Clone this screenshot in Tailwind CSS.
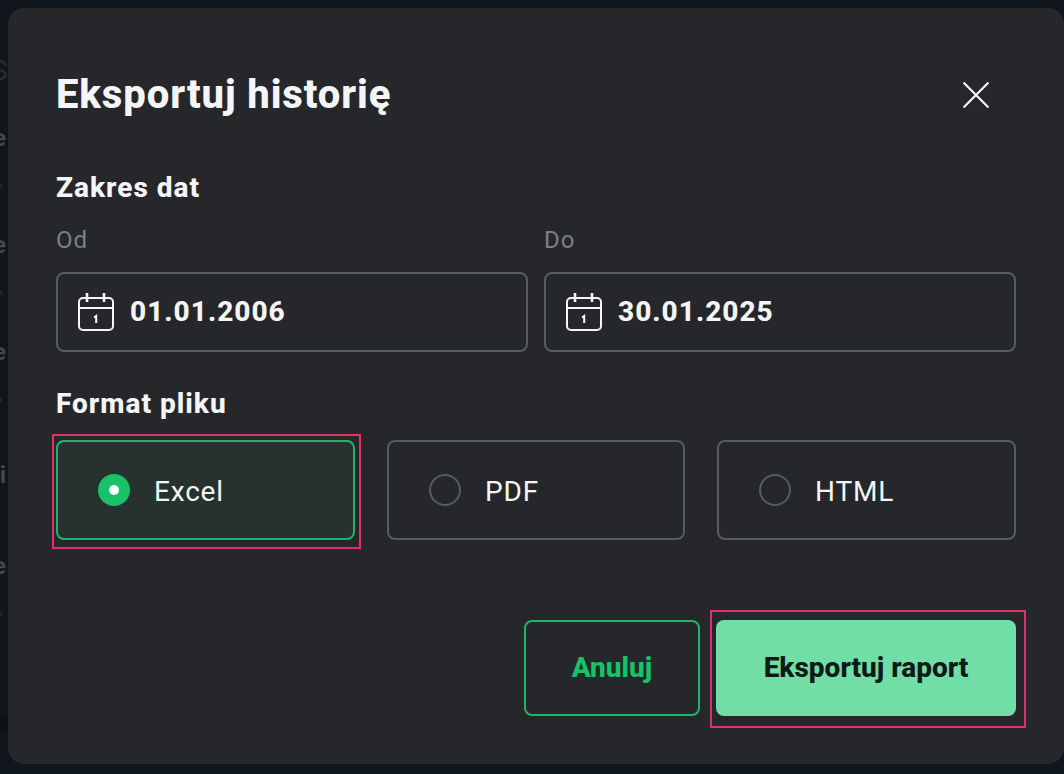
<!DOCTYPE html>
<html lang="en">
<head>
    <meta charset="UTF-8" />
    <title>Eksportuj historię</title>
    <script src="https://cdn.jsdelivr.net/npm/@tailwindcss/browser@4"></script>
</head>
<body class="relative bg-[#10161d] font-['Roboto',sans-serif] text-[#f4f5f7] w-[1064px] h-[774px] overflow-hidden">
    <!-- Page behind the dialog, only its left edge shows -->
    <div class="absolute left-0 top-0 w-[8px] h-[774px] overflow-hidden text-[#44484e] font-bold">
        <span class="absolute -left-[9px] top-[51px] text-[28px] leading-[40px] font-normal text-[#262b31]">S</span>
        <span class="absolute -left-[7px] top-[123px] text-[24px] leading-[30px]">e</span>
        <div class="absolute left-0 top-[184px] w-[2px] h-[4px] bg-[#23282e]"></div>
        <span class="absolute -left-[7px] top-[230px] text-[24px] leading-[30px]">e</span>
        <div class="absolute left-0 top-[291px] w-[2px] h-[4px] bg-[#23282e]"></div>
        <span class="absolute -left-[7px] top-[337px] text-[24px] leading-[30px]">e</span>
        <div class="absolute left-0 top-[398px] w-[2px] h-[4px] bg-[#23282e]"></div>
        <span class="absolute -left-[13px] top-[460px] text-[24px] leading-[30px]">ki</span>
        <span class="absolute -left-[7px] top-[551px] text-[24px] leading-[30px]">e</span>
        <div class="absolute left-0 top-[612px] w-[2px] h-[4px] bg-[#23282e]"></div>
        <div class="absolute left-0 top-[716px] w-full h-[16px] bg-[#0c1115]"></div>
    </div>

    <!-- Dialog -->
    <div class="relative ml-2 mt-2 w-[1056px] h-[756px] bg-[#25272b] rounded-2xl pl-12 pr-12 pt-[65px]">
        <div class="flex items-center justify-between h-[44px]">
            <h1 class="text-[40px] leading-[44px] font-extrabold tracking-[0.9px]">Eksportuj historię</h1>
            <svg class="w-[26px] h-[26px] mr-[27px]" viewBox="0 0 26 26" fill="none" stroke="#f4f5f7" stroke-width="2.2"><path d="M0.5 0.5L25.5 25.5M25.5 0.5L0.5 25.5"/></svg>
        </div>

        <h2 class="mt-[55px] text-[28px] leading-[32px] font-extrabold tracking-[1px]">Zakres dat</h2>

        <div class="grid grid-cols-2 gap-4 mt-[24px]">
            <div>
                <div class="text-[24px] leading-[24px] tracking-[1px] text-[#7b8087]">Od</div>
                <div class="mt-5 h-20 border-2 border-[#545c64] rounded-lg flex items-center pl-[20px] gap-[16px]">
                    <svg class="w-9 h-[38px] shrink-0" viewBox="0 0 36 38" fill="none" stroke="#f4f5f7" stroke-width="2">
                        <rect x="1" y="5" width="34" height="32" rx="4"/>
                        <path d="M1 15H35"/>
                        <path d="M9 0V9M26 0V9" stroke-width="2.6"/>
                        <path d="M16 24.5L18.2 23V30" stroke-width="2"/>
                    </svg>
                    <span class="text-[28px] leading-8 font-extrabold tracking-[1px]">01.01.2006</span>
                </div>
            </div>
            <div>
                <div class="text-[24px] leading-[24px] tracking-[1px] text-[#7b8087]">Do</div>
                <div class="mt-5 h-20 border-2 border-[#545c64] rounded-lg flex items-center pl-[20px] gap-[16px]">
                    <svg class="w-9 h-[38px] shrink-0" viewBox="0 0 36 38" fill="none" stroke="#f4f5f7" stroke-width="2">
                        <rect x="1" y="5" width="34" height="32" rx="4"/>
                        <path d="M1 15H35"/>
                        <path d="M9 0V9M26 0V9" stroke-width="2.6"/>
                        <path d="M16 24.5L18.2 23V30" stroke-width="2"/>
                    </svg>
                    <span class="text-[28px] leading-8 font-extrabold tracking-[1px]">30.01.2025</span>
                </div>
            </div>
        </div>

        <h2 class="mt-[36px] text-[28px] leading-[32px] font-extrabold tracking-[1px]">Format pliku</h2>

        <div class="flex justify-between mt-[20px]">
            <div class="relative w-[299px] h-[100px] bg-[#27322e] border-2 border-[#22b36a] rounded-lg flex items-center pl-[40px] gap-[24px]">
                <span class="w-8 h-8 rounded-full bg-[#19c168] flex items-center justify-center"><span class="w-[10px] h-[10px] rounded-full bg-white"></span></span>
                <span class="text-[28px] leading-8 tracking-[0.8px] translate-y-[2px]">Excel</span>
                <div class="absolute -left-[6px] -top-[8px] w-[309px] h-[115px] border-2 border-[#e0306a]"></div>
            </div>
            <div class="w-[298px] h-[100px] border-2 border-[#545c64] rounded-lg flex items-center pl-[40px] gap-[24px]">
                <span class="w-8 h-8 rounded-full border-2 border-[#545c64]"></span>
                <span class="text-[28px] leading-8 tracking-[0.8px] translate-y-[2px]">PDF</span>
            </div>
            <div class="w-[299px] h-[100px] border-2 border-[#545c64] rounded-lg flex items-center pl-[40px] gap-[24px]">
                <span class="w-8 h-8 rounded-full border-2 border-[#545c64]"></span>
                <span class="text-[28px] leading-8 tracking-[0.8px] translate-y-[2px]">HTML</span>
            </div>
        </div>

        <div class="flex justify-end gap-4 mt-[80px]">
            <button class="w-[176px] h-24 border-2 border-[#22b36a] rounded-lg text-[28px] font-extrabold text-[#19c168]">Anuluj</button>
            <div class="relative">
                <button class="w-[300px] h-24 bg-[#70dea6] rounded-lg text-[28px] font-extrabold text-[#0f1a16]">Eksportuj raport</button>
                <div class="absolute -left-[6px] -top-[10px] w-[316px] h-[118px] border-2 border-[#e0306a]"></div>
            </div>
        </div>
    </div>
</body>
</html>
